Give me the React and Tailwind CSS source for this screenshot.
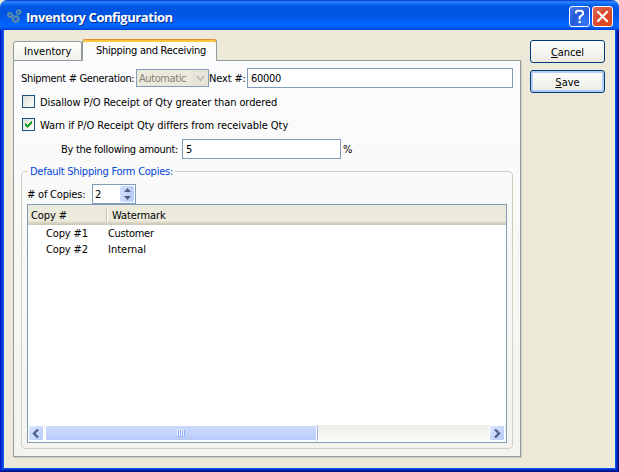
import React from "react";

function Gears() {
  return (
    <svg width="15" height="15" viewBox="0 0 15 15" fill="none" stroke="#6390a4">
      <circle cx="3" cy="6" r="1.9" strokeWidth="1.6" />
      <circle cx="11.6" cy="3" r="1.8" strokeWidth="1.5" />
      <circle cx="8.6" cy="10" r="2.5" strokeWidth="1.7" />
      <circle cx="8.6" cy="10" r="3.8" strokeWidth="1.2" strokeDasharray="1.2 1.4" />
      <circle cx="3" cy="6" r="2.8" strokeWidth="0.8" strokeDasharray="1 1" />
      <circle cx="11.6" cy="3" r="2.7" strokeWidth="0.8" strokeDasharray="1 1" />
    </svg>
  );
}

function TitleBar() {
  return (
    <header className="flex h-[30px] shrink-0 items-start rounded-t-[7px] bg-[linear-gradient(to_bottom,#0831c9_0px,#2f8cff_2px,#0a6af5_4px,#0055e1_7px,#0054e3_15px,#005ff8_21px,#0066ff_26px,#005bf0_28px,#003dd7_30px)] pl-[7px]">
      <div className="mt-[9px] h-[15px] w-[15px]"><Gears /></div>
      <h1 className="ml-1 mt-[8px] w-[200px] whitespace-nowrap font-['Open_Sans','Noto_Sans',sans-serif] text-[13px] font-bold leading-[18px] tracking-[-0.43px] text-white [font-stretch:normal] [text-shadow:1px_1px_0_#0a2a8c]">Inventory Configuration</h1>
      <button className="ml-auto mt-[6px] flex h-[21px] w-[21px] items-center justify-center rounded-[3px] border border-white bg-[radial-gradient(circle_at_75%_80%,#3478f5,#2458d8_55%,#4f7fe8)]">
        <svg width="15" height="17" viewBox="0 0 15 17" fill="none" stroke="#fff" strokeWidth="2">
          <path d="M4 5.5V4L5.2 2.8H9.6L11 4V6.3L7.7 9V11.5" />
          <path d="M6.5 14H8.9" strokeWidth="2.2" />
        </svg>
      </button>
      <button className="ml-[2px] mr-[6px] mt-[6px] flex h-[21px] w-[21px] items-center justify-center rounded-[3px] border border-white bg-[radial-gradient(circle_at_75%_80%,#e04a1c,#d9472a_50%,#e0705a)]">
        <svg width="13" height="13" viewBox="0 0 13 13" stroke="#fff" strokeWidth="2.2">
          <path d="M1.3 1.3L11.7 11.7M11.7 1.3L1.3 11.7" />
        </svg>
      </button>
    </header>
  );
}

function Checkbox({ checked }) {
  return (
    <span className="flex h-[13px] w-[13px] shrink-0 items-center justify-center border border-[#1c5180] bg-[linear-gradient(135deg,#dcdcd7,#fff)]">
      {checked && (
        <svg width="9" height="9" viewBox="0 0 9 9" fill="#21a121" shapeRendering="crispEdges">
          <path d="M1 3h1v1h1v1h1v-1h1v-1h1v-1h1v-1h1v3h-1v1h-1v1h-1v1h-1v1h-1v-1h-1v-1h-1z" />
        </svg>
      )}
    </span>
  );
}

function ScrollButton({ right }) {
  return (
    <button className="flex h-4 w-4 shrink-0 items-center justify-center rounded-[2px] border border-white bg-linear-to-br from-[#dbe5ff] to-[#b5c9f8]">
      <svg width="8" height="9" viewBox="0 0 8 9" fill="none" stroke="#4d6185" strokeWidth="2.3">
        <path d={right ? "M2 0.5L6 4.5L2 8.5" : "M6 0.5L2 4.5L6 8.5"} />
      </svg>
    </button>
  );
}

function CopiesTable() {
  return (
    <div className="flex h-[239px] w-[480px] flex-col border border-[#7f9db9] bg-white">
      <div className="flex h-[20px] shrink-0 items-start bg-[linear-gradient(to_bottom,#ebeadb_0,#ebeadb_16px,#e2decd_17px,#d6d2c2_18px,#cbc7b8_20px)]">
        <span className="w-[78px] pl-[3px] pt-[4px] tracking-[-0.1px]">Copy #</span>
        <span className="mt-[3px] h-[14px] w-[2px] border-l border-r border-l-[#c7c5b2] border-r-white" />
        <span className="pl-[4px] pt-[4px] tracking-[-0.1px]">Watermark</span>
      </div>
      <div className="flex-1">
        <div className="flex h-4"><span className="w-[80px] pl-[18px] pt-[2px] tracking-[-0.15px]">Copy #1</span><span className="pt-[2px] tracking-[-0.3px]">Customer</span></div>
        <div className="flex h-4"><span className="w-[80px] pl-[18px] pt-[2px] tracking-[-0.15px]">Copy #2</span><span className="pt-[2px]">Internal</span></div>
      </div>
      <div className="flex h-[17px] shrink-0 items-start bg-linear-to-b from-[#eeede5] to-[#fefefb]">
        <ScrollButton />
        <div className="ml-px flex h-4 w-[272px] items-center justify-center gap-px rounded-[2px] border border-white bg-linear-to-b from-[#c9d8fc] via-[#c5d4fc] to-[#b6cafa] shadow-[1px_0_0_#98b1e4]">
          <i className="h-[7px] w-px bg-[#8cb0f8] shadow-[-1px_-1px_0_#eef4fe]" />
          <i className="h-[7px] w-px bg-[#8cb0f8] shadow-[-1px_-1px_0_#eef4fe]" />
          <i className="h-[7px] w-px bg-[#8cb0f8] shadow-[-1px_-1px_0_#eef4fe]" />
          <i className="h-[7px] w-px bg-[#8cb0f8] shadow-[-1px_-1px_0_#eef4fe]" />
        </div>
        <div className="ml-auto mr-px"><ScrollButton right /></div>
      </div>
    </div>
  );
}

export default function App() {
  return (
    <div className="h-[472px] w-[619px] overflow-hidden bg-[#ece9d8] font-['DejaVu_Sans_Condensed','DejaVu_Sans',sans-serif] text-[11px] leading-[14px] text-black [font-stretch:condensed]">
      <div className="flex h-full flex-col whitespace-nowrap">
        <TitleBar />
        <div className="flex flex-1 bg-[#ece9d8] pb-1 pl-[13px] pr-1 shadow-[inset_1px_0_0_#0019cf,inset_-1px_0_0_#00138c,inset_0_-1px_0_#00138c,inset_2px_0_0_#0831d9,inset_-2px_-2px_0_#001da0,inset_3px_0_0_#0b3fe0,inset_-3px_-3px_0_#0434d6,inset_4px_0_0_#0f5cf0,inset_-4px_-4px_0_#0553ea]">
          <div className="w-[508px] pt-[9px]">
            <div className="flex h-[22px] items-end">
              <div className="flex h-[20px] w-[69px] rounded-t-[3px] border border-[#919b9c] bg-linear-to-b from-white to-[#f0f0ea] pl-[10px] pt-[3px]">Inventory</div>
              <div className="h-[22px] w-[135px] rounded-t-[3px] border-x border-t border-x-[#919b9c] border-t-[#e68b2c] bg-[#fcfcfe] pl-[13px] pt-[4px] tracking-[-0.27px] shadow-[inset_0_2px_0_#ffc73c]">Shipping and Receiving</div>
              <div className="h-px flex-1 bg-[#919b9c]" />
            </div>
            <div className="h-[396px] border-x border-b border-[#919b9c] bg-linear-to-b from-[#fcfcfe] to-[#f4f3ee] pl-[7px] pt-[7px] shadow-[1px_1px_1px_#d0cebf]">
              <div className="flex h-5 items-center">
                <span className="w-[115px] pt-px tracking-[-0.33px]">Shipment # Generation:</span>
                <div className="flex h-[18px] w-[73px] items-center border border-[#7f9db9] bg-[#ebe9d9] pl-[2px] text-[#84827a]">
                  <span className="pt-px tracking-[-0.4px]">Automatic</span>
                  <span className="ml-auto mr-px flex h-[14px] w-[14px] items-center justify-center rounded-[2px] border border-[#e0ddd0] bg-[#e9e7dd]">
                    <svg width="9" height="7" viewBox="0 0 9 7" fill="none" stroke="#c2c0b2" strokeWidth="2.2"><path d="M0.7 1L4.5 5L8.3 1" /></svg>
                  </span>
                </div>
                <span className="w-[38px] pt-px tracking-[-0.15px]">Next #:</span>
                <div className="h-5 w-[266px] border border-[#7f9db9] bg-white pl-[3px] pt-[3px] tracking-[-0.3px]">60000</div>
              </div>
              <div className="ml-px mt-[7px] flex h-[13px] items-center"><Checkbox /><span className="ml-[5px] pt-[2px] tracking-[-0.09px]">Disallow P/O Receipt of Qty greater than ordered</span></div>
              <div className="ml-px mt-[10px] flex h-[13px] items-center"><Checkbox checked /><span className="ml-[5px] pt-[2px] tracking-[-0.06px]">Warn if P/O Receipt Qty differs from receivable Qty</span></div>
              <div className="mt-[8px] flex h-5 items-center pl-[40px]">
                <span className="w-[121px] pt-px tracking-[-0.3px]">By the following amount:</span>
                <div className="h-5 w-[159px] border border-[#7f9db9] bg-white pl-[3px] pt-[3px]">5</div>
                <span className="ml-[2px] pt-px">%</span>
              </div>
              <fieldset className="mt-[5px] h-[285px] w-[492px] rounded-[4px] border border-[#d0d0bf] pl-[5px]">
                <legend className="ml-[1px] h-[14px] px-[2px] pt-px tracking-[-0.25px] text-[#0046d5]">Default Shipping Form Copies:</legend>
                <div className="mt-[6px] flex h-5 items-center">
                  <span className="w-[65px] pt-px tracking-[-0.2px]"># of Copies:</span>
                  <div className="flex h-5 w-[44px] border border-[#7f9db9] bg-white pl-[2px] pt-px">
                    <span className="pt-[2px]">2</span>
                    <span className="ml-auto mr-px flex h-4 w-[14px] flex-col items-center justify-between rounded-[2px] bg-linear-to-r from-[#cfdcfd] to-[#b9ccf9] py-[2px]">
                      <svg width="7" height="4" viewBox="0 0 7 4" fill="#4d6185"><path d="M3.5 0L7 4H0z" /></svg>
                      <svg width="7" height="4" viewBox="0 0 7 4" fill="#4d6185"><path d="M3.5 4L7 0H0z" /></svg>
                    </span>
                  </div>
                </div>
                <CopiesTable />
              </fieldset>
            </div>
          </div>
          <div className="ml-[9px] flex flex-col gap-[7px] pt-[10px]">
            <button className="h-[23px] w-[75px] rounded-[3px] border border-[#003c74] bg-linear-to-b from-white to-[#ecebe5] pt-[2px] tracking-[-0.1px]"><u>C</u>ancel</button>
            <button className="h-[23px] w-[75px] rounded-[3px] border border-[#003c74] bg-linear-to-b from-white to-[#ecebe5] pt-[2px] shadow-[inset_0_0_0_2px_#b5cbf3]"><u>S</u>ave</button>
          </div>
        </div>
      </div>
    </div>
  );
}
